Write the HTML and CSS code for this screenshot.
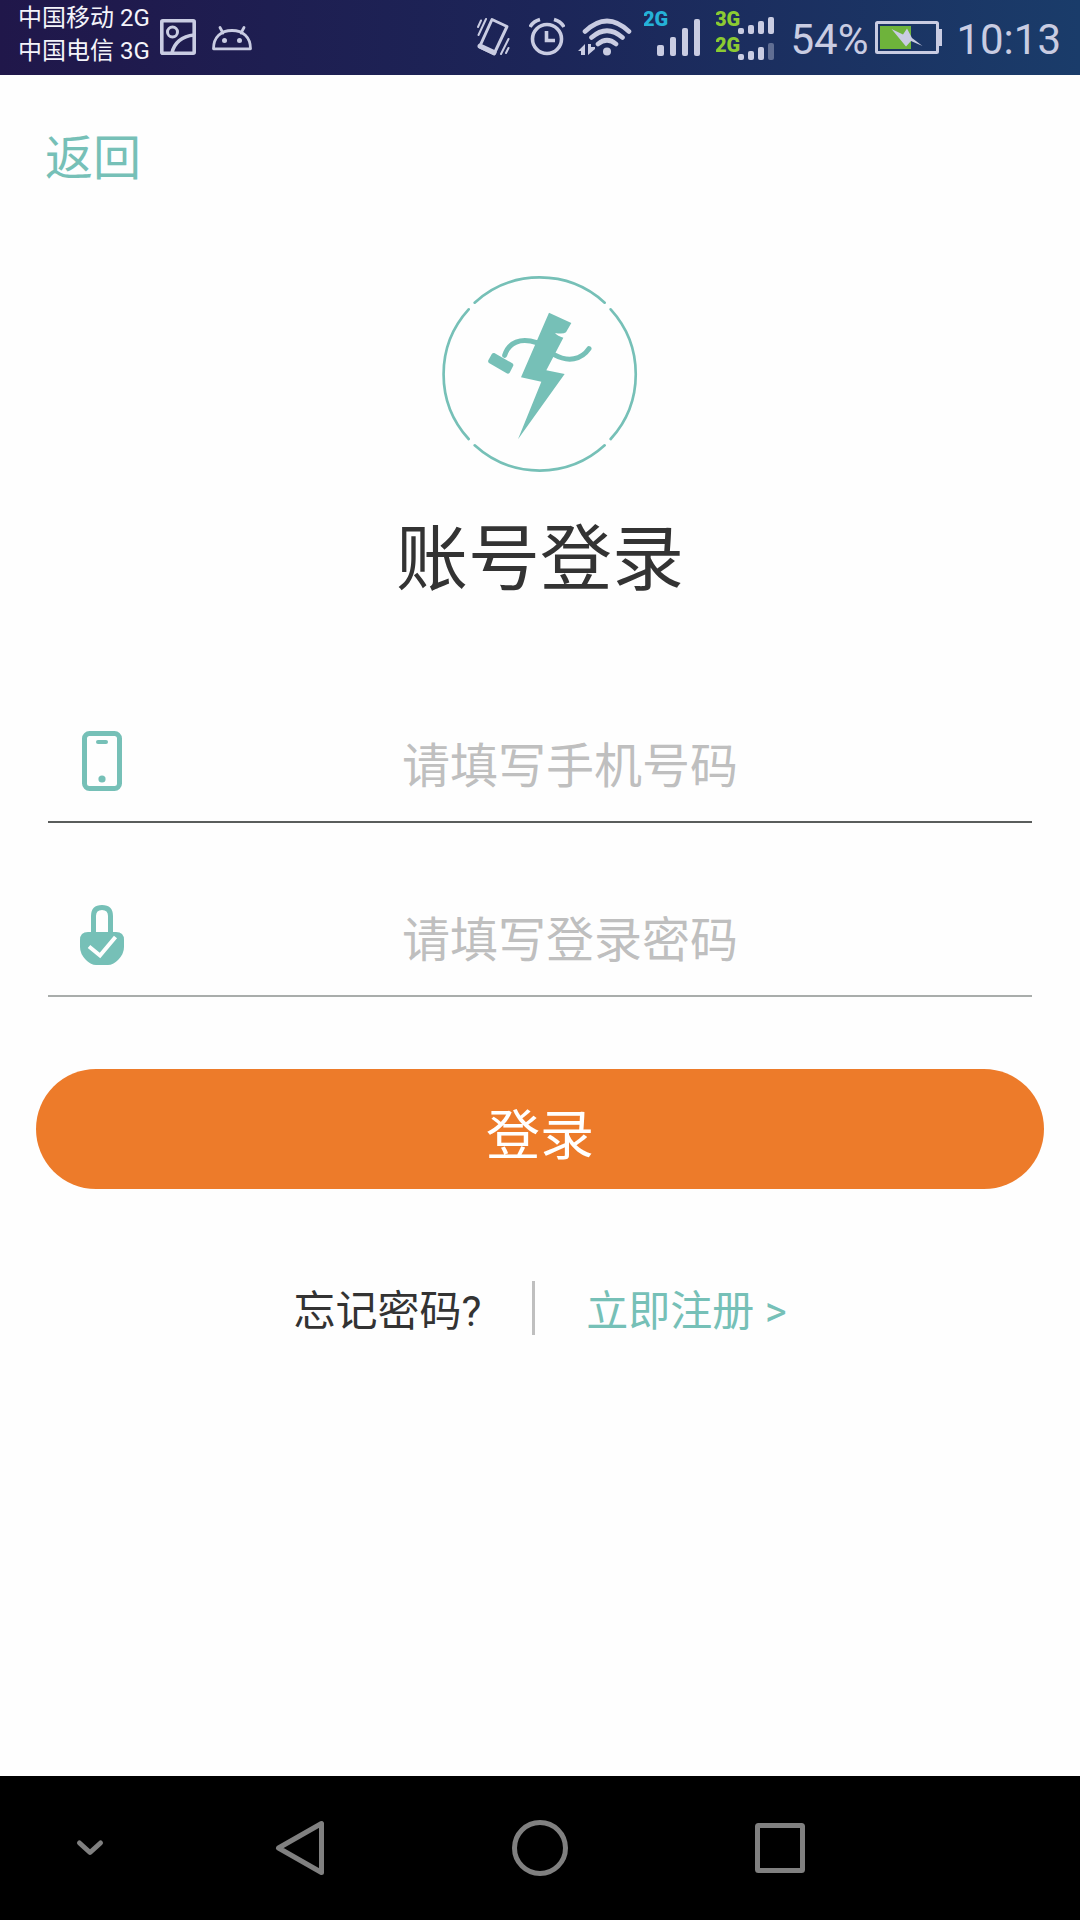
FILE: index.html
```html
<!DOCTYPE html>
<html lang="zh-CN">
<head>
<meta charset="utf-8">
<meta name="viewport" content="width=device-width, initial-scale=1">
<title>账号登录</title>
<link rel="stylesheet" href="styles.css">
</head>
<body>
<header class="status">
  <div class="carriers">
    <span>中国移动 2G</span>
    <span>中国电信 3G</span>
  </div>
  <svg class="status-icon" width="36" height="75" viewBox="160 0 36 75" fill="none" stroke="currentColor" stroke-width="3.600" aria-hidden="true">
    <rect x="161.800" y="20.800" width="32.400" height="32.400" rx="1"/>
    <circle cx="172.500" cy="32" r="5" stroke-width="3"/>
    <path d="M172 53C174 43 182 36 194 35"/>
  </svg>
  <svg class="status-icon" width="42" height="75" viewBox="211 0 42 75" fill="none" stroke="currentColor" stroke-width="2.800" stroke-linecap="round" stroke-linejoin="round" aria-hidden="true">
    <path d="M213.500 48.800C213.500 37 221 30.500 232 30.500S250.500 37 250.500 48.800ZM220 27.500L223 33M244 27.500L241 33"/>
    <g fill="currentColor" stroke="none"><circle cx="224.500" cy="40.500" r="2.500"/><circle cx="239.500" cy="40.500" r="2.500"/></g>
  </svg>
  <div class="indicators">
    <svg width="40" height="75" viewBox="477 0 40 75" fill="none" stroke="currentColor" stroke-width="3" stroke-linejoin="round" stroke-linecap="round" aria-hidden="true">
      <path d="M492 19.500L507 26.500L494 54L479.500 47Z"/>
      <path d="M480 46L494 52.500" stroke-width="5"/>
      <path d="M486 19L478.500 35M481 20.500L478 27M508.500 39L501 54M508.500 48L506 53" stroke-width="2"/>
    </svg>
    <svg width="36" height="75" viewBox="529 0 36 75" fill="none" stroke="currentColor" stroke-width="3.600" aria-hidden="true">
      <circle cx="547" cy="39" r="14.500"/>
      <path d="M546.500 31V40.500H555M530 27Q533 21.500 540 19.500M564 27Q561 21.500 554 19.500"/>
    </svg>
    <svg width="55" height="75" viewBox="577 0 55 75" fill="none" stroke="currentColor" stroke-width="4.600" stroke-linecap="round" aria-hidden="true">
      <path d="M585 31.500Q607 10.500 629 31.500M591.500 37.500Q607 24 622.500 37.500M598 44Q607 36.500 616 44"/>
      <circle cx="607" cy="51.500" r="4" fill="currentColor" stroke="none"/>
      <path d="M578 51L585 44V55H581V51ZM588 44H591V47H595V49L588 55Z" fill="currentColor" stroke="none"/>
    </svg>
    <svg width="60" height="75" viewBox="644 0 60 75" fill="currentColor" role="img" aria-label="2G">
      <text class="net net-blue" x="643" y="26">2G</text>
      <rect x="657" y="45" width="7" height="11" rx="2"/><rect x="670" y="37" width="6" height="19" rx="2"/><rect x="682" y="28" width="6" height="28" rx="2"/><rect x="694" y="19" width="6" height="37" rx="2"/>
    </svg>
    <svg width="64" height="75" viewBox="716 0 64 75" fill="currentColor" role="img" aria-label="3G 2G">
      <text class="net net-green" x="715" y="26">3G</text>
      <text class="net net-green" x="715" y="52">2G</text>
      <rect x="738" y="28" width="6" height="6" rx="2"/><rect x="748" y="25" width="6" height="9" rx="2"/><rect x="758" y="21" width="6" height="13" rx="2"/><rect x="768" y="17" width="6" height="17" rx="2"/>
      <rect x="738" y="54" width="6" height="6" rx="2"/><rect x="748" y="51" width="6" height="9" rx="2"/><rect x="758" y="47" width="6" height="13" rx="2"/><rect x="768" y="43" width="6" height="17" rx="2" opacity=".4"/>
    </svg>
    <div class="battery">
      <span class="reading">54%</span>
      <svg width="69" height="75" viewBox="875 0 69 75" aria-hidden="true">
        <rect x="876.500" y="22.500" width="61" height="30" rx="1" fill="none" stroke="currentColor" stroke-width="3"/>
        <path d="M939 29H942V46H939Z" fill="currentColor"/>
        <path d="M880 26H911V49H880Z" fill="#6eb33b"/>
        <path d="M891.500 29L903 34.500L907 28.500L912 38L922.500 46L911 41L906 46.500Z" fill="currentColor"/>
      </svg>
    </div>
    <time class="reading">10:13</time>
  </div>
</header>

<main class="page">
  <a class="back" href="#">返回</a>
  <svg class="logo" viewBox="60 43 600 600" aria-hidden="true">
    <g fill="none" stroke="currentColor" stroke-width="8" stroke-linecap="round">
      <path d="M164 129A289 289 0 0 1 554 129M572 149A289 289 0 0 1 572 538M554 557A289 289 0 0 1 164 557M146 538A289 289 0 0 1 146 149"/>
      <path d="M254 287C266 248 302 233 350 249M402 285C444 308 484 301 507 267" stroke-width="15"/>
    </g>
    <g fill="currentColor">
      <path d="M387 159L454 190L438 218Q430 224 405 220Q413 230 430 234L379 332L434 343L294 539L364 366L303 353Z"/>
      <path d="M223 280Q218 279 215 284L205 302Q203 307 207 310L260 341Q265 344 269 339L279 320Q282 314 277 311Z"/>
    </g>
  </svg>
  <h1 class="title">账号登录</h1>

  <form class="form">
    <div class="field field-active">
      <label for="phone" aria-label="手机号码">
        <svg width="60" height="60" viewBox="0 0 60 60" fill="none" stroke="currentColor" aria-hidden="true">
          <rect x="12.500" y="2.500" width="35" height="55" rx="5" stroke-width="5"/>
          <path d="M26 11H34" stroke-width="4" stroke-linecap="round"/>
          <circle cx="30" cy="48" r="3.600" fill="currentColor" stroke="none"/>
        </svg>
      </label>
      <input id="phone" type="tel" placeholder="请填写手机号码">
    </div>
    <div class="field">
      <label for="password" aria-label="登录密码">
        <svg width="60" height="60" viewBox="0 0 60 60" fill="none" stroke="currentColor" aria-hidden="true">
          <path d="M21.500 30V11Q21.500 2.500 30 2.500T38.500 11V30" stroke-width="5"/>
          <path d="M16 27H44Q52 27 52 35V42Q52 49 46 55Q41 60 36 60H24Q19 60 14 55Q8 49 8 42V35Q8 27 16 27Z" fill="currentColor" stroke="none"/>
          <path d="M17 41.500L28 50.500L43.500 32" stroke="#fefefe" stroke-width="4"/>
        </svg>
      </label>
      <input id="password" type="password" placeholder="请填写登录密码">
    </div>
    <button class="submit" type="submit">登录</button>
  </form>

  <div class="links">
    <a class="forgot" href="#">忘记密码?</a>
    <a class="register" href="#">立即注册 &gt;</a>
  </div>
</main>

<nav class="navbar">
  <button type="button" aria-label="收起">
    <svg width="56" height="60" viewBox="-28 -30 56 60"><path d="M-10.500 -5L0 4.500L10.500 -5" stroke-width="5"/></svg>
  </button>
  <button type="button" aria-label="返回">
    <svg width="56" height="60" viewBox="-28 -30 56 60"><path d="M21.500 -24.500V24.500L-21.500 0Z" stroke-width="5"/></svg>
  </button>
  <button type="button" aria-label="主页">
    <svg width="56" height="60" viewBox="-28 -30 56 60"><circle r="25.500" stroke-width="5"/></svg>
  </button>
  <button type="button" aria-label="最近任务">
    <svg width="56" height="60" viewBox="-28 -30 56 60"><rect x="-22.500" y="-22.500" width="45" height="45" rx="1" stroke-width="5"/></svg>
  </button>
</nav>
</body>
</html>
```
FILE: styles.css
```css
:root {
  --teal: #76c0b7;
  --ink: #333;
  --paper: #fefefe;
}

* {
  box-sizing: border-box;
}

body {
  margin: 0;
  min-height: 100vh;
  display: flex;
  flex-direction: column;
  background: var(--paper);
  color: var(--ink);
  font-family: Roboto, "Noto Sans CJK SC", sans-serif;
}

a {
  text-decoration: none;
}

svg {
  display: block;
}

/* Status bar */
.status {
  display: flex;
  align-items: center;
  height: 75px;
  padding: 0 19px 0 18px;
  background: linear-gradient(90deg, #20174a, #1c2558 50%, #1a3c6a);
  color: #c9cce2;
}

.carriers {
  display: flex;
  flex-direction: column;
  margin-right: 10px;
  padding-bottom: 6px;
  color: #f4f4fa;
  font-size: 24px;
  line-height: 33px;
  white-space: nowrap;
}

.status-icon {
  margin-right: 15px;
}

.indicators {
  display: flex;
  align-items: center;
  gap: 12px;
  margin-left: auto;
  font-size: 42px;
  line-height: 71px;
}

.reading {
  padding-top: 4px;
}

.battery {
  display: flex;
  gap: 7px;
  margin-left: -2px;
}

.net {
  font-size: 20px;
  font-weight: 900;
}

.net-blue {
  fill: #25b2d8;
}

.net-green {
  fill: #8ccb32;
}

/* Login page */
.page {
  flex: 1;
  display: flex;
  flex-direction: column;
  padding: 54px 36px;
}

.back {
  align-self: flex-start;
  margin-left: 9px;
  color: var(--teal);
  font-size: 48px;
  line-height: 60px;
}

.logo {
  width: 200px;
  height: 200px;
  align-self: center;
  margin-top: 85px;
  color: var(--teal);
}

.title {
  margin: 36px 0 0;
  font-size: 72px;
  font-weight: 400;
  line-height: 100px;
  text-align: center;
}

.form {
  display: flex;
  flex-direction: column;
  margin-top: 89px;
}

.field {
  display: flex;
  align-items: center;
  height: 124px;
  margin: 0 12px 50px;
  padding: 2px 24px 0;
  border-bottom: 2px solid #a9adab;
}

.field-active {
  border-bottom-color: #5a5d5c;
}

.field label {
  color: var(--teal);
}

.field input {
  flex: 1;
  min-width: 0;
  height: 80px;
  padding: 10px 0 0;
  border: 0;
  outline: 0;
  background: none;
  color: var(--ink);
  font: inherit;
  font-size: 48px;
  text-align: center;
}

.field input::placeholder {
  color: #bfbfbf;
  opacity: 1;
}

.submit {
  height: 120px;
  margin-top: 22px;
  padding: 4px 0 0;
  border: 0;
  border-radius: 60px;
  background: #ed7b2a;
  color: #fff;
  font: inherit;
  font-size: 54px;
}

.links {
  display: flex;
  justify-content: center;
  margin-top: 92px;
  font-size: 42px;
  line-height: 46px;
}

.forgot {
  padding: 8px 51px 0 0;
  border-right: 3px solid #bfbfbf;
  color: var(--ink);
}

.register {
  padding: 8px 0 0 51px;
  color: var(--teal);
}

/* System navigation */
.navbar {
  display: grid;
  grid-template-columns: 3fr 4fr 4fr 4fr 3fr;
  height: 144px;
  background: #000;
}

.navbar button {
  display: flex;
  align-items: center;
  justify-content: center;
  padding: 0;
  border: 0;
  background: none;
  color: #808080;
}

.navbar svg {
  fill: none;
  stroke: currentColor;
  stroke-linecap: round;
  stroke-linejoin: round;
}
```
